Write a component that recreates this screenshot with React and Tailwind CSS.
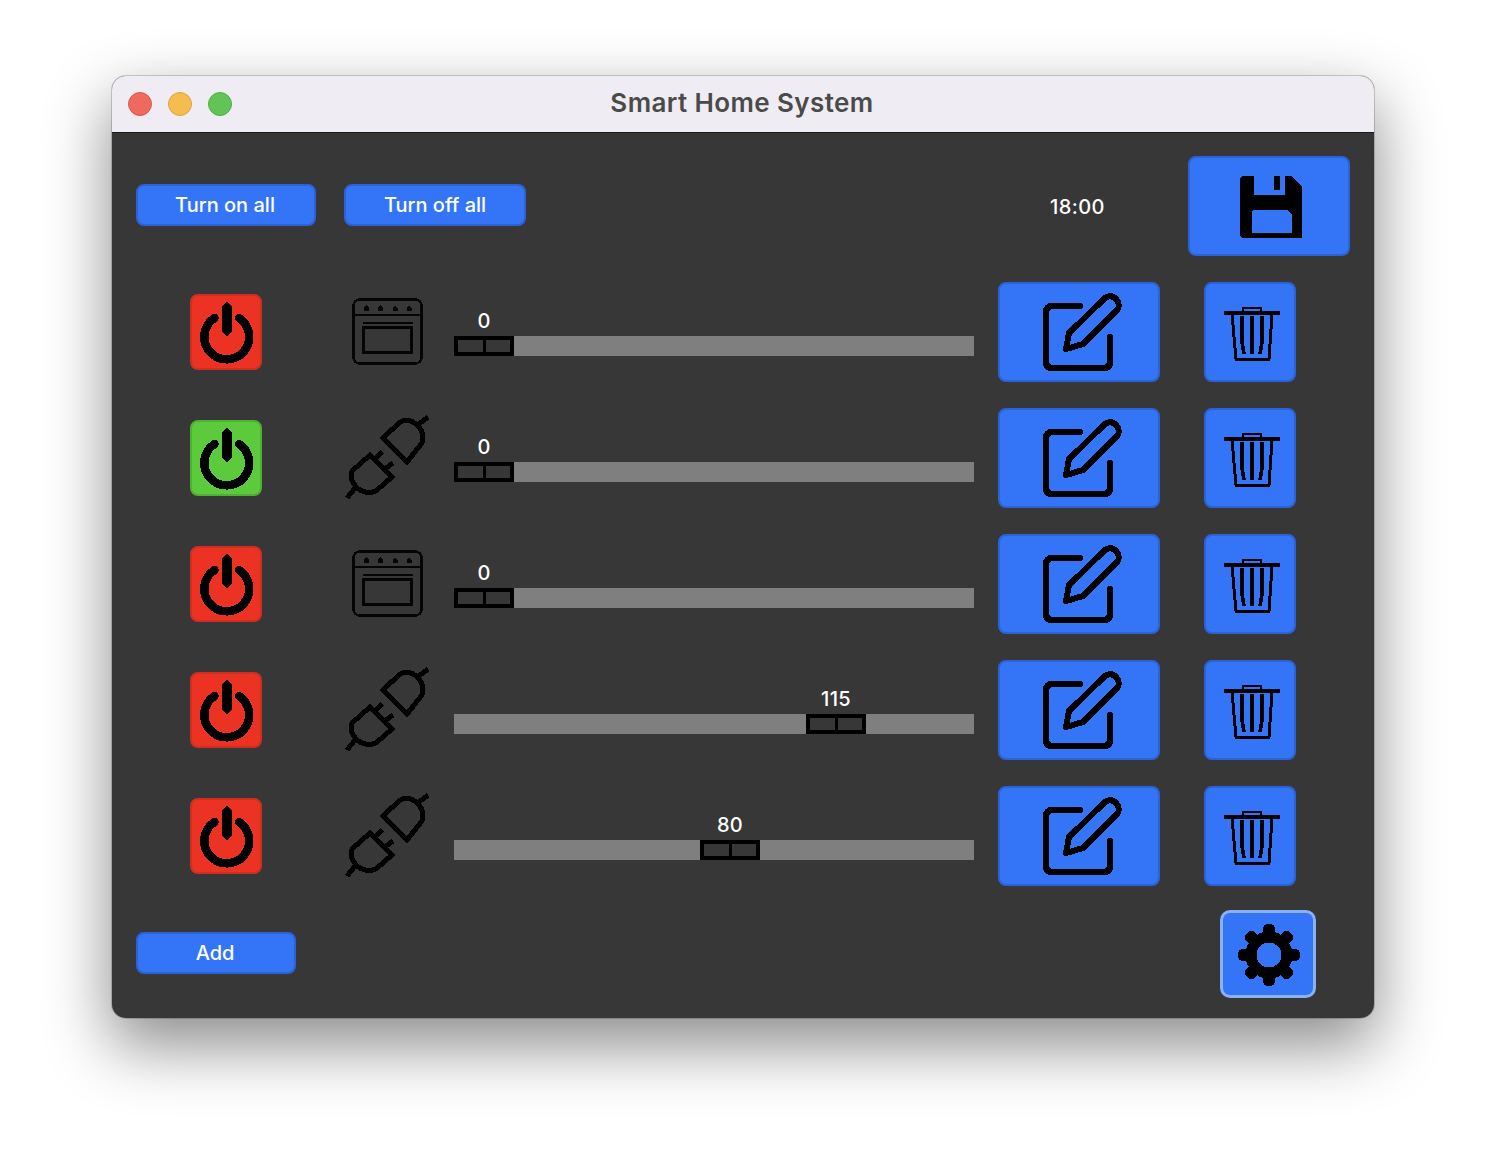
import React from "react";

const devices = [
  { on: false, type: "oven", value: 0, left: 0 },
  { on: true, type: "plug", value: 0, left: 0 },
  { on: false, type: "oven", value: 0, left: 0 },
  { on: false, type: "plug", value: 115, left: 352 },
  { on: false, type: "plug", value: 80, left: 246 },
];

function PowerIcon() {
  return (
    <svg width="72" height="76" viewBox="0 0 72 76" fill="none" stroke="#000" shapeRendering="crispEdges">
      <path d="M24.500 24A22.500 22.500 0 1 0 49 24" strokeWidth="8.500" strokeLinecap="round" />
      <path d="M37 7L42 13V38L37 42L32 38V13Z" fill="#000" stroke="none" />
    </svg>
  );
}

function OvenIcon() {
  return (
    <svg width="72" height="68" viewBox="0 0 72 68" fill="none" stroke="#050505" strokeWidth="2.500" shapeRendering="crispEdges">
      <rect x="1.500" y="1.500" width="68" height="64" rx="6" />
      <path d="M1.500 17H70M11 25H61" />
      <rect x="11" y="29" width="48" height="25" strokeWidth="3" />
      <g fill="#050505" stroke="none">
        <path d="M12 13V10L14.500 7L17 10V13Z" />
        <path d="M26 13V10L28.500 7L31 10V13Z" />
        <path d="M40.500 13V10L43 7L45.500 10V13Z" />
        <path d="M54.500 13V10L57 7L59.500 10V13Z" />
      </g>
    </svg>
  );
}

function PlugIcon() {
  return (
    <svg width="88" height="88" viewBox="0 0 88 88" fill="none" stroke="#000" strokeWidth="5" shapeRendering="crispEdges">
      <path d="M39 24L56 8Q66 3 75 13Q81 20 78 29L63 48Z" />
      <path d="M75 10L84 3" />
      <path d="M26 41L48 63L32 77Q22 81 13 74Q5 66 8 57Z" />
      <path d="M31 45L38 38M41 55L49 49M11 74L3 84" />
    </svg>
  );
}

function EditIcon() {
  return (
    <svg width="162" height="100" viewBox="0 0 162 100" fill="none" stroke="#000" shapeRendering="crispEdges">
      <path d="M82 24H55Q48 24 48 31V80Q48 86 55 86H105Q112 86 112 80V55" strokeWidth="6.500" strokeLinecap="round" />
      <path d="M68 67L71 51L107 16Q113 12 118 17Q123 23 119 28L85 62Z" strokeWidth="6" strokeLinejoin="round" />
    </svg>
  );
}

function TrashIcon() {
  return (
    <svg width="92" height="100" viewBox="0 0 92 100" fill="none" stroke="#000" shapeRendering="crispEdges">
      <path d="M20 31H76" strokeWidth="3.500" />
      <path d="M39 31V26H57V31" strokeWidth="2.500" />
      <path d="M28 32L32 77H65L68 32" strokeWidth="3" />
      <path d="M38 34V60L40 72M48 34V72M58 34V60L56 72" strokeWidth="3.500" />
    </svg>
  );
}

function SaveIcon() {
  return (
    <svg width="162" height="100" viewBox="0 0 162 100" shapeRendering="crispEdges">
      <path
        fillRule="evenodd"
        d="M56 20H66V39H97V20H104L114 31V82H56Q52 82 52 78V24Q52 20 56 20ZM67 54Q64 54 64 57V77H104V59L100 54Z"
      />
      <rect x="86" y="20" width="6" height="14" />
    </svg>
  );
}

function GearIcon() {
  return (
    <svg width="64" height="64" viewBox="-33 -33 64 64" shapeRendering="crispEdges">
      <circle r="18" fill="none" stroke="#000" strokeWidth="11" />
      {[0, 45, 90, 135, 180, 225, 270, 315].map((a) => (
        <rect key={a} x="-6" y="-31" width="12" height="14" rx="5" transform={`rotate(${a})`} />
      ))}
    </svg>
  );
}

function Slider({ value, left }) {
  return (
    <div className="relative w-[520px] h-[20px] bg-[#7f7f7f] mt-[28px]">
      <div className="absolute top-0 h-[20px] w-[60px] flex bg-[#373737] border-4 border-black" style={{ left }}>
        <div className="flex-1 border-r-[3px] border-black" />
        <div className="flex-1" />
      </div>
      <span
        className="absolute top-[-27px] w-[60px] text-center text-[20px] leading-[24px] font-medium tracking-[0.3px] text-white"
        style={{ left }}
      >
        {value}
      </span>
    </div>
  );
}

function Row({ device }) {
  return (
    <div className="flex items-center h-[100px]">
      <div className="w-[180px] flex justify-center">
        <button
          className={
            device.on
              ? "w-[72px] h-[76px] rounded-[8px] border-2 border-[#4fb033] bg-[#5bcb3b]"
              : "w-[72px] h-[76px] rounded-[8px] border-2 border-[#cf2f22] bg-[#eb3223]"
          }
        >
          <div className="-m-[2px]">
            <PowerIcon />
          </div>
        </button>
      </div>
      <div className="w-[138px] flex justify-center">
        {device.type === "oven" ? (
          <div className="pl-[6px] mb-[1px]">
            <OvenIcon />
          </div>
        ) : (
          <div className="pl-[6px]">
            <PlugIcon />
          </div>
        )}
      </div>
      <Slider value={device.value} left={device.left} />
      <button className="ml-[24px] w-[162px] h-[100px] rounded-[8px] border-2 border-[#2c62d6] bg-[#3375f6]">
        <div className="-m-[2px]">
          <EditIcon />
        </div>
      </button>
      <button className="ml-[44px] w-[92px] h-[100px] rounded-[8px] border-2 border-[#2c62d6] bg-[#3375f6]">
        <div className="-m-[2px]">
          <TrashIcon />
        </div>
      </button>
    </div>
  );
}

export default function App() {
  return (
    <div
      className="w-[1486px] h-[1166px] bg-white pt-[76px] pl-[112px] overflow-hidden text-white"
      style={{ fontFamily: "Inter, 'Liberation Sans', sans-serif" }}
    >
      <div className="w-[1262px] h-[942px] rounded-[14px] overflow-hidden bg-[#373737] shadow-[0_0_0_1px_rgba(0,0,0,0.18),0_26px_64px_2px_rgba(0,0,0,0.45)]">
        <div className="relative h-[57px] bg-[#efedf3] border-b-[1.5px] border-[#1a1a1a] flex items-center justify-center">
          <div className="absolute left-[16px] top-[16px] flex gap-[16px]">
            <div className="w-[24px] h-[24px] rounded-full bg-[#ee6a5f] border border-[#d65a50]" />
            <div className="w-[24px] h-[24px] rounded-full bg-[#f5bd4f] border border-[#dba53f]" />
            <div className="w-[24px] h-[24px] rounded-full bg-[#61c454] border border-[#52ad46]" />
          </div>
          <h1 className="text-[26px] font-semibold tracking-[0.4px] text-[#4a4a4a] pr-[2px] mb-[4px]">Smart Home System</h1>
        </div>

        <div className="pl-[24px] pt-[23px]">
          <div className="flex items-center h-[100px]">
            <button className="w-[180px] h-[42px] mt-[-2px] pr-[2px] rounded-[8px] border-2 border-[#2c62d6] bg-[#3375f6] text-[20px] font-medium">
              Turn on all
            </button>
            <button className="ml-[28px] w-[182px] h-[42px] mt-[-2px] rounded-[8px] border-2 border-[#2c62d6] bg-[#3375f6] text-[20px] font-medium">
              Turn off all
            </button>
            <span className="ml-[524px] mt-[2px] text-[20px] font-medium tracking-[0.4px] w-[54px] text-center whitespace-nowrap">
              18:00
            </span>
            <button className="ml-[84px] w-[162px] h-[100px] rounded-[8px] border-2 border-[#2c62d6] bg-[#3375f6]">
              <div className="-m-[2px]">
                <SaveIcon />
              </div>
            </button>
          </div>

          <div className="mt-[26px] flex flex-col gap-[26px]">
            {devices.map((d, i) => (
              <Row key={i} device={d} />
            ))}
          </div>

          <div className="flex items-center mt-[24px] h-[88px]">
            <button className="w-[160px] h-[42px] mt-[-2px] pr-[2px] rounded-[8px] border-2 border-[#2c62d6] bg-[#3375f6] text-[20px] font-medium">
              Add
            </button>
            <button className="ml-[924px] w-[96px] h-[88px] rounded-[10px] border-[3px] border-[#8ab0f6] bg-[#3375f6] flex items-center justify-center">
              <GearIcon />
            </button>
          </div>
        </div>
      </div>
    </div>
  );
}
